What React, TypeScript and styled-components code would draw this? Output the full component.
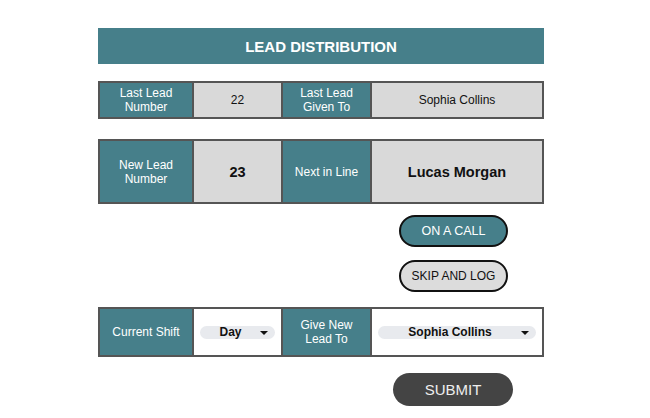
import React from "react";
import styled, { createGlobalStyle } from "styled-components";

const Global = createGlobalStyle`
  html, body { margin: 0; padding: 0; background: #ffffff; }
  body { font-family: "Liberation Sans", Arial, sans-serif; }
  * { box-sizing: border-box; }
`;

const TEAL = "#467f8a";
const BORDER = "#555555";
const FONT = `"Liberation Sans", Arial, sans-serif`;

const Page = styled.div`
  width: 446px;
  margin-left: 98px;
  padding-top: 28px;
  display: flex;
  flex-direction: column;
`;

const Header = styled.div`
  height: 36px;
  background: ${TEAL};
  color: #ffffff;
  font-weight: bold;
  font-size: 15px;
  display: flex;
  align-items: center;
  justify-content: center;
  padding-top: 1px;
`;

const Row = styled.div<{ $h: number; $mt: number }>`
  margin-top: ${(p) => p.$mt}px;
  height: ${(p) => p.$h}px;
  border: 2px solid ${BORDER};
  display: grid;
  grid-template-columns: 92px 89px 89px 1fr;
`;

const Cell = styled.div<{ $kind: "label" | "value" | "plain"; $first?: boolean; $big?: boolean }>`
  display: flex;
  align-items: center;
  justify-content: center;
  text-align: center;
  border-left: ${(p) => (p.$first ? "none" : `2px solid ${BORDER}`)};
  background: ${(p) => (p.$kind === "label" ? TEAL : p.$kind === "value" ? "#d9d9d9" : "#ffffff")};
  color: ${(p) => (p.$kind === "label" ? "#ffffff" : "#111111")};
  font-size: ${(p) => (p.$big ? "14.5px" : "12px")};
  font-weight: ${(p) => (p.$big ? "bold" : "normal")};
  line-height: 14px;
  padding: 0 6px;
`;

const Select = styled.div`
  width: 100%;
  height: 13px;
  border-radius: 7px;
  background: #e8eaee;
  display: flex;
  align-items: center;
  position: relative;
  font-size: 12px;
  font-weight: bold;
  color: #111111;
`;

const SelectText = styled.span`
  flex: 1;
  text-align: center;
  padding-right: 14px;
  line-height: 13px;
`;

const Arrow = styled.span`
  position: absolute;
  right: 7px;
  top: 5px;
  width: 0;
  height: 0;
  border-left: 4px solid transparent;
  border-right: 4px solid transparent;
  border-top: 4px solid #111111;
`;

const Actions = styled.div<{ $mt: number }>`
  margin-top: ${(p) => p.$mt}px;
  margin-left: 295px;
  width: 120px;
  display: flex;
  flex-direction: column;
  align-items: center;
  gap: 13px;
`;

const PillButton = styled.button<{ $variant: "teal" | "gray" }>`
  width: 109px;
  height: 32px;
  border-radius: 16px;
  border: 2.5px solid #111111;
  background: ${(p) => (p.$variant === "teal" ? TEAL : "#dcdcdc")};
  color: ${(p) => (p.$variant === "teal" ? "#ffffff" : "#111111")};
  font-family: ${FONT};
  font-size: ${(p) => (p.$variant === "teal" ? "12.5px" : "12px")};
  padding: 0;
  display: flex;
  align-items: center;
  justify-content: center;
  margin-left: 1px;
`;

const SubmitButton = styled.button`
  width: 120px;
  height: 33px;
  border-radius: 17px;
  border: none;
  background: #444444;
  color: #eeeeee;
  font-family: ${FONT};
  font-size: 15px;
  padding: 0;
`;

export default function App() {
  return (
    <>
      <Global />
      <Page>
        <Header>LEAD DISTRIBUTION</Header>

        <Row $h={38} $mt={17}>
          <Cell $kind="label" $first>
            Last Lead
            <br />
            Number
          </Cell>
          <Cell $kind="value">22</Cell>
          <Cell $kind="label">
            Last Lead
            <br />
            Given To
          </Cell>
          <Cell $kind="value">Sophia Collins</Cell>
        </Row>

        <Row $h={65} $mt={20}>
          <Cell $kind="label" $first>
            New Lead
            <br />
            Number
          </Cell>
          <Cell $kind="value" $big>
            23
          </Cell>
          <Cell $kind="label">Next in Line</Cell>
          <Cell $kind="value" $big>
            Lucas Morgan
          </Cell>
        </Row>

        <Actions $mt={11}>
          <PillButton $variant="teal">ON A CALL</PillButton>
          <PillButton $variant="gray">SKIP AND LOG</PillButton>
        </Actions>

        <Row $h={50} $mt={15}>
          <Cell $kind="label" $first>
            Current Shift
          </Cell>
          <Cell $kind="plain">
            <Select>
              <SelectText>Day</SelectText>
              <Arrow />
            </Select>
          </Cell>
          <Cell $kind="label">
            Give New
            <br />
            Lead To
          </Cell>
          <Cell $kind="plain">
            <Select>
              <SelectText>Sophia Collins</SelectText>
              <Arrow />
            </Select>
          </Cell>
        </Row>

        <Actions $mt={16}>
          <SubmitButton>SUBMIT</SubmitButton>
        </Actions>
      </Page>
    </>
  );
}
